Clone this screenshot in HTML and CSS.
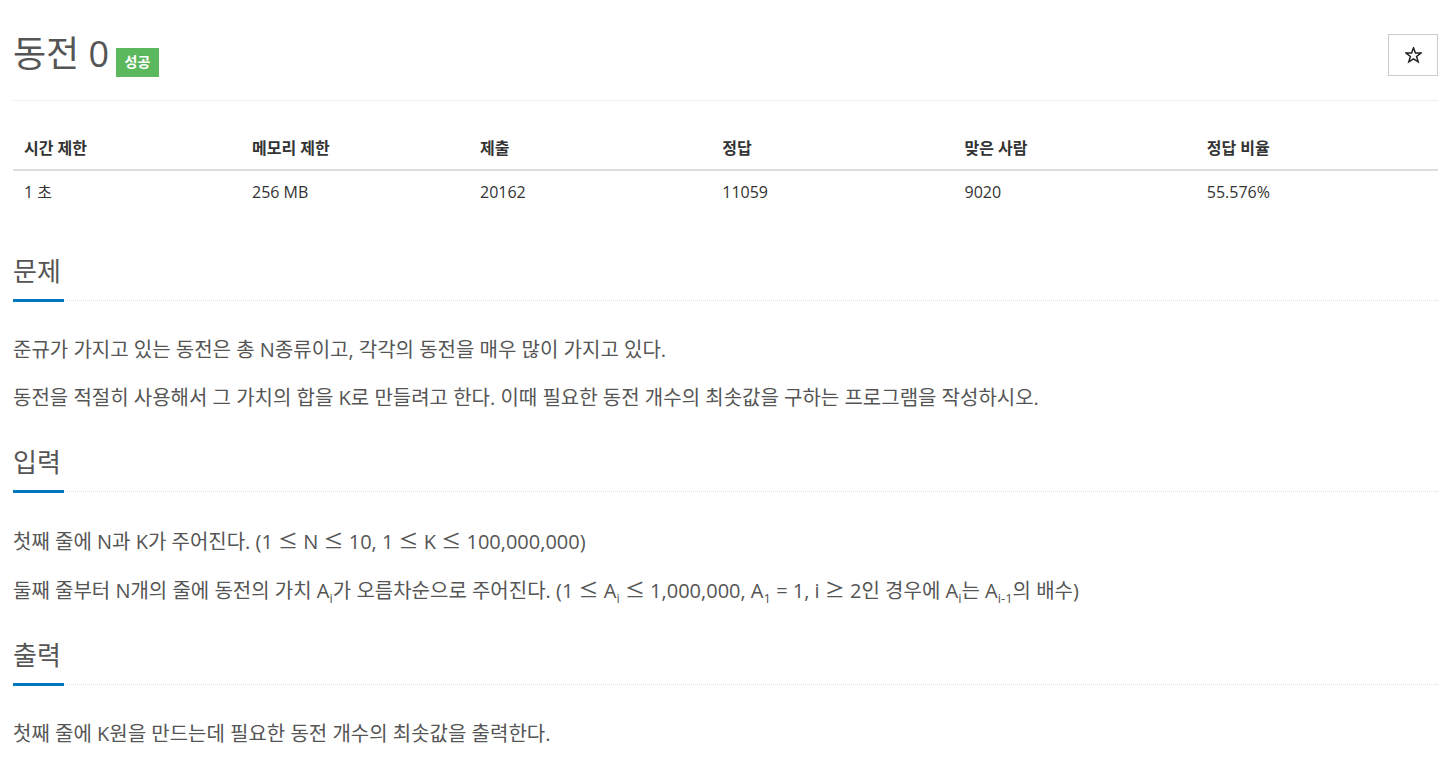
FILE: index.html
```html
<!DOCTYPE html>
<html>
<head>
	<meta charset="utf-8">
	<title>동전 0</title>
	<link rel="stylesheet" href="styles.css">
</head>
<body>
	<div class="wrapper">
		<div class="page_header">
			<h1 class="problem_title">동전 0 <span class="result_label">성공</span></h1>
			<button class="star_btn" type="button">
				<svg width="17" height="17" viewBox="0 0 16 16">
					<path d="M8 0.8 L9.8 5.6 L15 5.7 L10.9 8.9 L12.4 14 L8 11.1 L3.6 14 L5.1 8.9 L1 5.7 L6.2 5.6 Z" fill="none" stroke="#222" stroke-width="1.4" stroke-linejoin="miter"/>
				</svg>
			</button>
		</div>

		<table class="info_table">
			<thead>
				<tr>
					<th class="col_s">시간 제한</th>
					<th class="col_s">메모리 제한</th>
					<th>제출</th>
					<th>정답</th>
					<th>맞은 사람</th>
					<th>정답 비율</th>
				</tr>
			</thead>
			<tbody>
				<tr>
					<td>1 초</td>
					<td>256 MB</td>
					<td>20162</td>
					<td>11059</td>
					<td>9020</td>
					<td>55.576%</td>
				</tr>
			</tbody>
		</table>

		<!-- 문제 -->
		<section class="problem_section">
			<div class="headline">
				<h2>문제</h2>
			</div>
			<div class="problem_text">
				<p>준규가 가지고 있는 동전은 총 N종류이고, 각각의 동전을 매우 많이 가지고 있다.</p>
				<p>동전을 적절히 사용해서 그 가치의 합을 K로 만들려고 한다. 이때 필요한 동전 개수의 최솟값을 구하는 프로그램을 작성하시오.</p>
			</div>
		</section>

		<!-- 입력 -->
		<section class="problem_section">
			<div class="headline">
				<h2>입력</h2>
			</div>
			<div class="problem_text">
				<p>첫째 줄에 N과 K가 주어진다. (1 <span class="op">≤</span> N <span class="op">≤</span> 10, 1 <span class="op">≤</span> K <span class="op">≤</span> 100,000,000)</p>
				<p>둘째 줄부터 N개의 줄에 동전의 가치 A<sub>i</sub>가 오름차순으로 주어진다. (1 <span class="op">≤</span> A<sub>i</sub> <span class="op">≤</span> 1,000,000, A<sub>1</sub> = 1, i <span class="op">≥</span> 2인 경우에 A<sub>i</sub>는 A<sub>i-1</sub>의 배수)</p>
			</div>
		</section>

		<!-- 출력 -->
		<section class="problem_section">
			<div class="headline">
				<h2>출력</h2>
			</div>
			<div class="problem_text">
				<p>첫째 줄에 K원을 만드는데 필요한 동전 개수의 최솟값을 출력한다.</p>
			</div>
		</section>
	</div>
</body>
</html>
```

FILE: styles.css
```css
*{margin: 0; padding: 0; box-sizing: border-box;}
body{font-family: "Open Sans", "Noto Sans CJK KR", sans-serif; color: #333; background: #fff;
	font-size: 16px; line-height: 1.42857;}
.wrapper{padding: 0 16px 0 13px;}

/* 제목 */
.page_header{display: flex; justify-content: space-between; align-items: flex-start;
	padding-top: 30px; padding-bottom: 23px; border-bottom: 1px solid #eee;}
.problem_title{font-size: 36px; font-weight: 400; color: #555; line-height: 1.1; margin-top: 4px;}
.result_label{display: inline-block; background-color: #5cb85c; color: #fff; font-size: 14px;
	font-weight: 700; line-height: 1; padding: 7px 9px 8px; margin-left: -3px; vertical-align: baseline;}
.star_btn{width: 50px; height: 42px; border: 1px solid #ccc; background: #fff; margin-top: 4px;
	display: flex; align-items: center; justify-content: center;}

/* 정보 테이블 */
.info_table{width: 100%; table-layout: fixed; border-collapse: collapse; margin-top: 26px; margin-bottom: 40px;}
.info_table th, .info_table td{text-align: left; padding: 9px 11px; line-height: 24px; width: 17%;}
.info_table th.col_s{width: 16%;}
.info_table th{font-weight: 700; border-bottom: 2px solid #ddd;}

/* 문제 본문 */
.problem_section{margin-top: 31px;}
.headline{border-bottom: 1px dotted #ddd;}
.headline h2{display: inline-block; font-size: 26px; font-weight: 400; color: #555; line-height: 36px;
	padding-bottom: 10px; padding-right: 3px; border-bottom: 3px solid #0076c0; margin-bottom: -2px;}
.problem_text{padding-top: 34px; font-size: 20px; line-height: 30px; color: #555;}
.problem_text p{margin-bottom: 18px;}
.problem_text sub{font-size: 13px; line-height: 0;}
.problem_text .op{font-family: "Noto Sans CJK KR", sans-serif;}
```
